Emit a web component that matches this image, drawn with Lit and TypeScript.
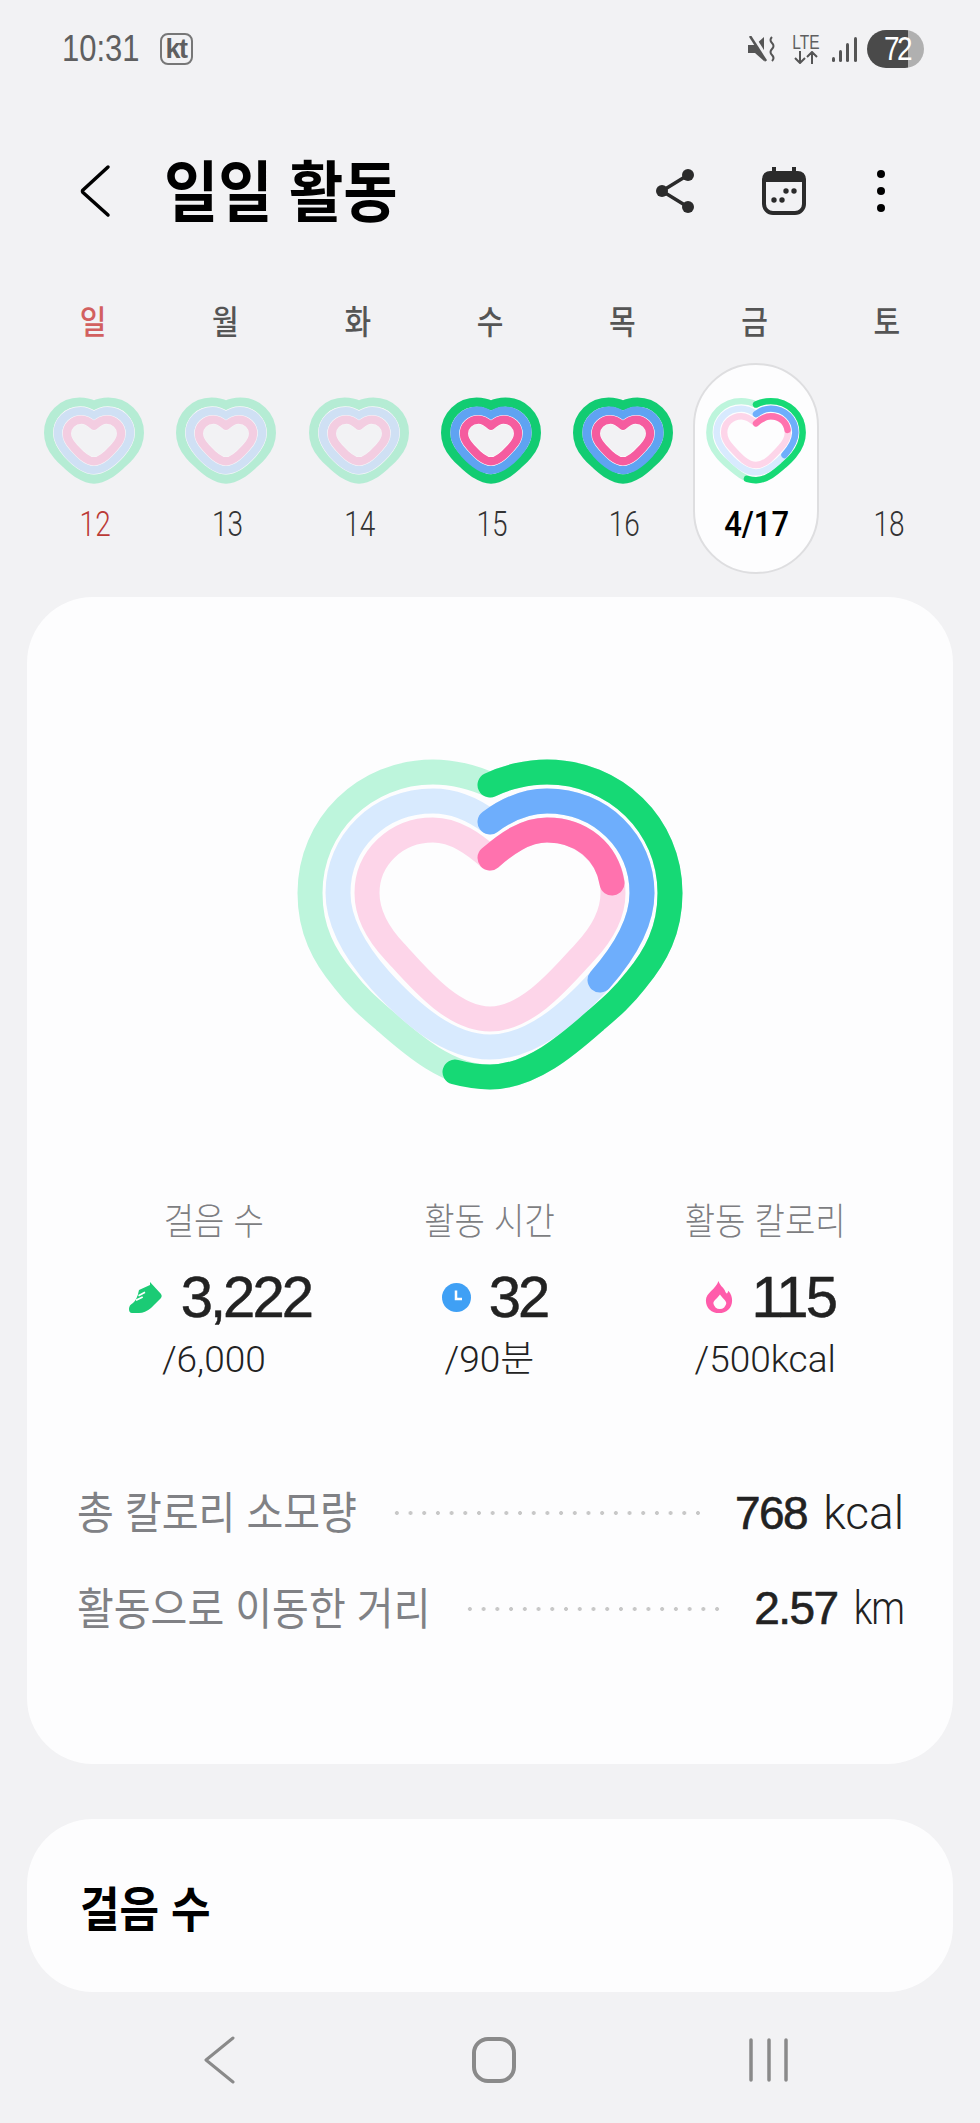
import { LitElement, html, svg, css } from 'lit';
import { customElement } from 'lit/decorators.js';

// ring centre lines, drawn in a 440x390 box and mirrored around x=220
const GREEN_TOP = 'M220 55C236 47 258 42 277 42C345 42 400 95 400 163C400 200 386 226 366 250C352 268 340 278 325 291C300 313 262 347 220 347';
const GREEN_LEFT = 'C178 347 140 313 115 291C100 278 88 268 74 250C54 226 40 200 40 163C40 95 95 42 163 42C182 42 204 47 220 55';
const BLUE_ARC = 'M220 92C236 80 256 71 277 71C331 71 372 112 372 163C372 195 352 225 330 250';
const BLUE_REST = 'C300 283 262 317 220 317C178 317 140 283 110 250C88 225 68 195 68 163C68 112 109 71 163 71C184 71 204 80 220 92';
const PINK_FULL = 'M220 128C236 114 255 100 277 100C314 100 343 128 343 163C343 185 331 205 315 222C292 247 258 289 220 289C182 289 148 247 125 222C109 205 97 185 97 163C97 128 126 100 163 100C185 100 204 114 220 128';

const RINGS = {
  green: GREEN_TOP + GREEN_LEFT,
  blue: BLUE_ARC + BLUE_REST,
  pink: PINK_FULL,
};

const ARCS = {
  green: GREEN_TOP + 'C208 347 196 345 185 342',
  blue: BLUE_ARC,
  pink: 'M220 128C236 114 255 100 277 100C312 100 337 122 342 153',
};

type HeartMode = 'faded' | 'full' | 'today';

const ring = (d: string, color: string) => svg`
  <path d=${d} fill="none" stroke=${color} stroke-width="25" stroke-linecap="round"></path>
`;

// the small closed hearts have thicker bands than the big one, so each ring is
// pulled in around the middle of the heart to keep the outer edge in place
const thickRing = (d: string, color: string, scale: number, band: number, gap = '') => svg`
  <g transform="translate(220 190) scale(${scale}) translate(-220 -190)" fill="none" stroke-linecap="round">
    ${gap ? svg`<path d=${d} stroke=${gap} stroke-width=${(band + 4) / scale}></path>` : ''}
    <path d=${d} stroke=${color} stroke-width=${band / scale}></path>
  </g>
`;

function heartRings(mode: HeartMode) {
  if (mode === 'faded') {
    return svg`
      ${thickRing(RINGS.green, '#b5ecd4', 0.972, 36)}
      ${thickRing(RINGS.blue, '#cfe0f4', 0.914, 34, '#f6f6f8')}
      ${thickRing(RINGS.pink, '#f3cde1', 0.85, 32, '#f6f6f8')}
    `;
  }
  if (mode === 'full') {
    return svg`
      ${thickRing(RINGS.green, '#12cc72', 0.972, 36)}
      ${thickRing(RINGS.blue, '#5fa3f2', 0.914, 36)}
      ${thickRing(RINGS.pink, '#f55c9f', 0.85, 32, '#ffffff')}
    `;
  }
  return svg`
    ${ring(RINGS.green, '#bdf5dc')}
    ${ring(RINGS.blue, '#d8eafe')}
    ${ring(RINGS.pink, '#fdd5e9')}
    ${ring(ARCS.green, '#16d975')}
    ${ring(ARCS.blue, '#6eaefc')}
    ${ring(ARCS.pink, '#ff72ae')}
  `;
}

const DAYS: { label: string; date: string; mode: HeartMode | null; sunday?: boolean; selected?: boolean }[] = [
  { label: '일', date: '12', mode: 'faded', sunday: true },
  { label: '월', date: '13', mode: 'faded' },
  { label: '화', date: '14', mode: 'faded' },
  { label: '수', date: '15', mode: 'full' },
  { label: '목', date: '16', mode: 'full' },
  { label: '금', date: '4/17', mode: 'today', selected: true },
  { label: '토', date: '18', mode: null },
];

const shoeIcon = html`<svg class="stat-icon" viewBox="6 7 36 35" width="36" height="35">
  <path fill="#1bcb75" d="M29 9L40 21Q41.500 23 40 25L30 35Q24 40 18 40H11Q8 40 8 36Q8 32 12 30Q16 27 18 17L29 12Z"></path>
  <path fill="none" stroke="#fdfdfe" stroke-width="1.800" d="M17.500 22.700L24 19.300M15 27.300L21.700 24"></path>
</svg>`;

const clockIcon = html`<svg class="stat-icon" viewBox="0 0 29 29" width="29" height="29">
  <circle cx="14.500" cy="14.500" r="14.500" fill="#3fa0f5"></circle>
  <path fill="none" stroke="#fff" stroke-width="2.500" d="M14 7.500V16H20"></path>
</svg>`;

const flameIcon = html`<svg class="stat-icon" viewBox="5 8 27 33" width="28" height="32">
  <path fill="#ff5cab" d="M18 8C20 14 24 15 25 19Q27 23 28 18C31 21 32 25 32 28C32 36 26 41 18.500 41C11 41 5 36 5 28C5 20 15 17 18 8Z"></path>
  <path fill="#fdfdfe" d="M19.500 22C22 26 26 28 26 31A6.700 6.700 0 0 1 12.700 31C12.700 28 17 26 19.500 22Z"></path>
</svg>`;

@customElement('app-root')
export class AppRoot extends LitElement {
  static styles = css`
    :host {
      display: block;
      width: 980px;
      height: 2123px;
      background: #f2f2f4;
      overflow: hidden;
      font-family: "Liberation Sans", "Noto Sans CJK KR", sans-serif;
    }

    /* the text in the reference is a bit taller than any installed font */
    .tall {
      display: inline-block;
      transform: scaleY(1.12);
    }

    .status {
      height: 98px;
      display: flex;
      align-items: center;
      padding: 0 56px 0 62px;
      color: #5f5f60;
    }
    .time {
      display: inline-block;
      font-size: 31px;
      line-height: 40px;
      transform: scaleY(1.22);
    }
    .carrier {
      margin-left: 20px;
      width: 33px;
      height: 32px;
      box-sizing: border-box;
      border: 2px solid #777;
      border-radius: 8px;
      display: flex;
      align-items: center;
      justify-content: center;
      font-size: 27px;
      font-weight: 700;
      letter-spacing: -1.5px;
      line-height: 1;
    }
    .status-right {
      margin-left: auto;
      display: flex;
      align-items: center;
    }
    .lte {
      margin-left: 16px;
      width: 28px;
      display: flex;
      flex-direction: column;
      align-items: center;
      font-size: 15.500px;
      line-height: 16px;
    }
    .lte span {
      display: inline-block;
      transform: scaleY(1.25);
    }
    .signal {
      margin-left: 12px;
    }
    .battery {
      margin-left: 10px;
      width: 57px;
      height: 38px;
      border-radius: 19px;
      color: #fff;
      font-size: 28px;
      letter-spacing: -2.5px;
      line-height: 38px;
      padding-left: 17px;
      box-sizing: border-box;
    }
    .battery span {
      display: inline-block;
      transform: scaleY(1.2);
    }

    .app-bar {
      height: 186px;
      display: flex;
      align-items: center;
      padding: 0 87px 0 78px;
    }
    .title {
      margin: 6px 0 0 48px;
      font-size: 59px;
      font-weight: 700;
      color: #000;
      line-height: 70px;
    }
    .actions {
      margin-left: auto;
      display: flex;
      align-items: center;
      gap: 57px;
    }

    .week {
      display: grid;
      grid-template-columns: repeat(7, 132.3px);
      padding: 0 28px;
    }
    .day-label {
      height: 79px;
      line-height: 78px;
      text-align: center;
      padding-right: 2px;
      font-size: 29px;
      font-weight: 500;
      color: #555;
    }
    .day-label.sunday {
      color: #d2605f;
    }
    .day {
      width: 126px;
      height: 211px;
      box-sizing: border-box;
      justify-self: center;
      border: 2px solid transparent;
      border-radius: 63px;
      display: flex;
      flex-direction: column;
      align-items: center;
      padding-top: 32px;
    }
    .day.selected {
      background: #fdfdfe;
      border-color: #dedee0;
    }
    .mini {
      display: block;
      width: 100px;
      height: 87px;
    }
    .date {
      display: inline-block;
      margin-top: 24px;
      padding-left: 2px;
      font-family: Roboto, sans-serif;
      font-size: 28px;
      font-weight: 300;
      line-height: 34px;
      color: #333;
      transform: scaleY(1.22);
    }
    .date.sunday {
      color: #bb3a36;
    }
    .date.selected {
      color: #000;
      font-size: 31px;
      font-weight: 500;
      transform: scaleY(1.12);
    }

    .card {
      margin: 23px 27px 0;
      background: #fdfdfe;
      border-radius: 66px;
    }
    .summary {
      height: 1167px;
      padding-top: 133px;
      box-sizing: border-box;
    }
    .big-heart {
      display: block;
      margin: 0 auto;
      width: 440px;
      height: 390px;
    }
    .stats {
      margin-top: 81px;
      display: grid;
      grid-template-columns: repeat(3, 1fr);
      padding: 0 50px 0 49px;
      text-align: center;
    }
    .stat-label {
      font-size: 33px;
      font-weight: 300;
      line-height: 44px;
      color: #7d7e82;
    }
    .stat-value {
      margin-top: 20px;
      display: flex;
      align-items: center;
      justify-content: center;
      gap: 18px;
      padding-left: 10px;
      font-size: 58px;
      letter-spacing: -3px;
      line-height: 64px;
      color: #222;
      -webkit-text-stroke: 0.5px #222;
    }
    .stat-goal {
      margin-top: 9px;
      font-family: Roboto, "Noto Sans CJK KR", sans-serif;
      font-size: 37px;
      font-weight: 300;
      line-height: 44px;
      color: #222;
    }
    .totals {
      margin-top: 101px;
      padding: 0 49px 0 50px;
      display: flex;
      flex-direction: column;
      gap: 36px;
    }
    .total {
      height: 60px;
      display: flex;
      align-items: center;
    }
    .total-label {
      font-size: 40px;
      color: #808185;
      line-height: 60px;
    }
    .dots {
      flex: 1;
      height: 4px;
      margin: 0 30px 0 33px;
      background: radial-gradient(circle, #c8c8c8 1.8px, transparent 2.2px) left center / 13.500px 4px;
      background-repeat: round no-repeat;
    }
    .total-value {
      font-size: 46px;
      letter-spacing: -1.5px;
      color: #222;
      line-height: 60px;
      -webkit-text-stroke: 0.6px #222;
    }
    .total-unit {
      font-family: Roboto, sans-serif;
      font-weight: 300;
      margin-left: 16px;
      font-size: 46px;
      letter-spacing: 0;
      -webkit-text-stroke: 0;
    }
    .total-unit.km {
      display: inline-block;
      font-size: 38px;
      letter-spacing: -1px;
      transform: scaleY(1.2);
      transform-origin: 50% 75%;
    }

    .steps {
      margin-top: 55px;
      height: 173px;
      display: flex;
      align-items: center;
      padding-left: 53px;
      font-size: 43px;
      font-weight: 700;
      color: #000;
    }

    .nav {
      display: grid;
      grid-template-columns: repeat(3, 1fr);
      padding: 44px 74px 0 83px;
      justify-items: center;
    }
  `;

  render() {
    return html`
      <div class="status">
        <span class="time">10:31</span>
        <span class="carrier">kt</span>
        <div class="status-right">
          <svg viewBox="0 0 28 26" width="28" height="26">
            <path fill="#555" d="M0 9H7L16 1V25L7 17H0Z"></path>
            <path stroke="#f2f2f4" stroke-width="4" d="M4 -1L20 24"></path>
            <path stroke="#555" stroke-width="2.500" d="M2 0L18 25"></path>
            <path fill="none" stroke="#555" stroke-width="2" d="M24 1Q21 4 24 7T24 13T24 19T24 25"></path>
          </svg>
          <div class="lte">
            <span>LTE</span>
            <svg viewBox="0 0 26 13" width="26" height="13">
              <path fill="none" stroke="#555" stroke-width="2" d="M7 0V12M2 7L7 12L12 7M19 13V1M14 6L19 1L24 6"></path>
            </svg>
          </div>
          <svg class="signal" viewBox="0 0 25 25" width="25" height="25">
            <rect x="0" y="20" width="3" height="5" rx="1.500" fill="#555"></rect>
            <rect x="7" y="13" width="3" height="12" rx="1.500" fill="#555"></rect>
            <rect x="14" y="6" width="3" height="19" rx="1.500" fill="#555"></rect>
            <rect x="22" y="0" width="3" height="25" rx="1.500" fill="#555"></rect>
          </svg>
          <div class="battery" style="background: linear-gradient(90deg, #4a4a4a 72%, #b0b0b0 72%)"><span>72</span></div>
        </div>
      </div>

      <div class="app-bar">
        <svg viewBox="0 0 38 56" width="38" height="56">
          <path fill="none" stroke="#000" stroke-width="3.500" stroke-linecap="round" stroke-linejoin="round" d="M30 4L5 27Q4 28 5 29.500L30 52"></path>
        </svg>
        <div class="title tall">일일 활동</div>
        <div class="actions">
          <svg viewBox="0 0 48 56" width="48" height="56">
            <path fill="none" stroke="#2b2b2b" stroke-width="3.500" d="M37 12L11 28L37 44"></path>
            <circle cx="37" cy="12" r="6" fill="#2b2b2b"></circle>
            <circle cx="11" cy="28" r="6" fill="#2b2b2b"></circle>
            <circle cx="37" cy="44" r="6" fill="#2b2b2b"></circle>
          </svg>
          <svg viewBox="0 0 56 56" width="56" height="56">
            <path stroke="#2b2b2b" stroke-width="4" d="M18 4V12M38 4V12"></path>
            <rect x="8" y="10" width="40" height="40" rx="9" fill="none" stroke="#2b2b2b" stroke-width="4"></rect>
            <path fill="#2b2b2b" d="M6 19V17Q6 8 15 8H41Q50 8 50 17V19Z"></path>
            <circle cx="30" cy="28" r="2.700" fill="#2b2b2b"></circle>
            <circle cx="38" cy="28" r="2.700" fill="#2b2b2b"></circle>
            <circle cx="18" cy="37" r="2.700" fill="#2b2b2b"></circle>
            <circle cx="26" cy="37" r="2.700" fill="#2b2b2b"></circle>
          </svg>
          <svg viewBox="0 0 24 56" width="24" height="56">
            <circle cx="12" cy="11" r="4" fill="#000"></circle>
            <circle cx="12" cy="28" r="4" fill="#000"></circle>
            <circle cx="12" cy="45" r="4" fill="#000"></circle>
          </svg>
        </div>
      </div>

      <div class="week">
        ${DAYS.map(d => html`<div class="day-label ${d.sunday ? 'sunday' : ''}"><span class="tall">${d.label}</span></div>`)}
        ${DAYS.map(d => html`
          <div class="day ${d.selected ? 'selected' : ''}">
            <svg class="mini" viewBox="27 29 386 330">${d.mode ? heartRings(d.mode) : ''}</svg>
            <span class="date ${d.sunday ? 'sunday' : ''} ${d.selected ? 'selected' : ''}">${d.date}</span>
          </div>
        `)}
      </div>

      <div class="card summary">
        <svg class="big-heart" viewBox="0 0 440 390">${heartRings('today')}</svg>

        <div class="stats">
          <div>
            <div class="stat-label"><span class="tall">걸음 수</span></div>
            <div class="stat-value">${shoeIcon}<span>3,222</span></div>
            <div class="stat-goal">/6,000</div>
          </div>
          <div>
            <div class="stat-label"><span class="tall">활동 시간</span></div>
            <div class="stat-value">${clockIcon}<span>32</span></div>
            <div class="stat-goal">/90분</div>
          </div>
          <div>
            <div class="stat-label"><span class="tall">활동 칼로리</span></div>
            <div class="stat-value">${flameIcon}<span>115</span></div>
            <div class="stat-goal">/500kcal</div>
          </div>
        </div>

        <div class="totals">
          <div class="total">
            <span class="total-label tall">총 칼로리 소모량</span>
            <span class="dots"></span>
            <span class="total-value">768<span class="total-unit">kcal</span></span>
          </div>
          <div class="total">
            <span class="total-label tall">활동으로 이동한 거리</span>
            <span class="dots"></span>
            <span class="total-value">2.57<span class="total-unit km">km</span></span>
          </div>
        </div>
      </div>

      <div class="card steps"><span class="tall">걸음 수</span></div>

      <div class="nav">
        <svg viewBox="0 0 34 48" width="34" height="48">
          <path fill="none" stroke="#8a8a8a" stroke-width="3" stroke-linecap="round" stroke-linejoin="round" d="M30 2L3 24L30 46"></path>
        </svg>
        <svg viewBox="0 0 48 48" width="48" height="48">
          <rect x="4" y="3" width="40" height="42" rx="14" fill="none" stroke="#8a8a8a" stroke-width="4"></rect>
        </svg>
        <svg viewBox="0 0 40 48" width="40" height="48">
          <path fill="none" stroke="#8a8a8a" stroke-width="3.500" stroke-linecap="round" d="M2 4V44M20 4V44M37 4V44"></path>
        </svg>
      </div>
    `;
  }
}
